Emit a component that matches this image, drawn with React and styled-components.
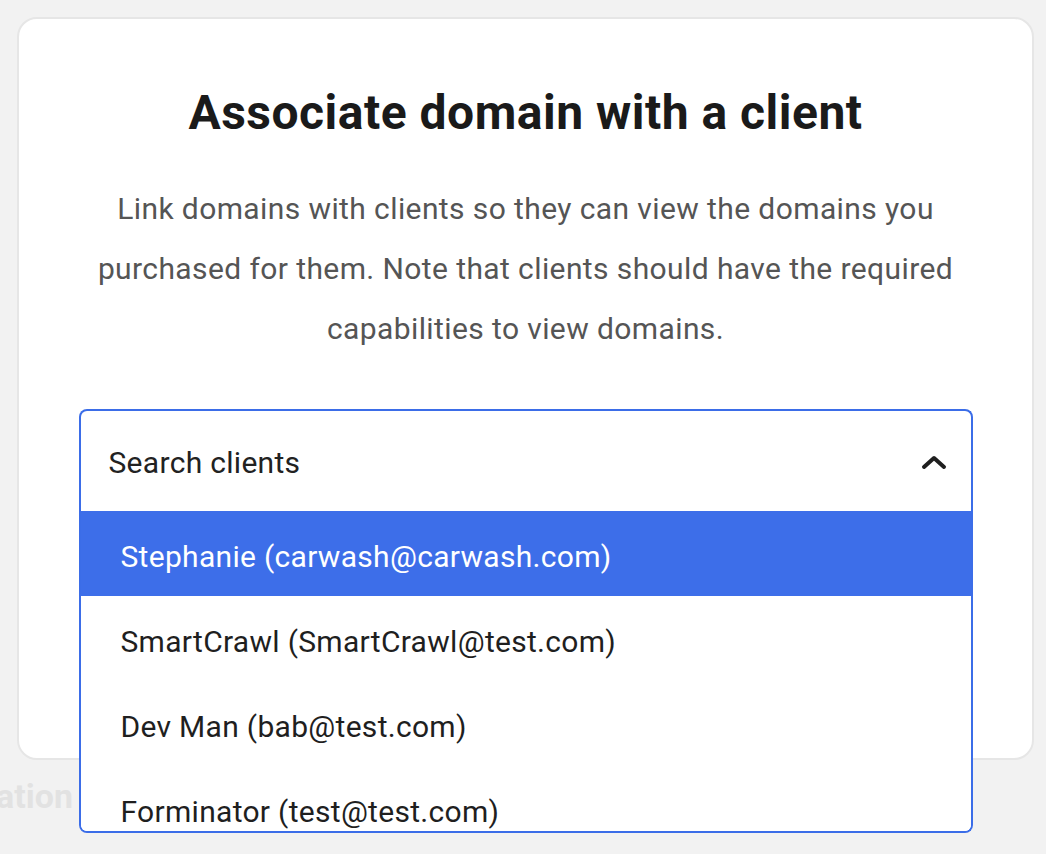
import React from 'react';
import styled, { createGlobalStyle } from 'styled-components';

const clients = [
  { name: 'Stephanie', email: 'carwash@carwash.com' },
  { name: 'SmartCrawl', email: 'SmartCrawl@test.com' },
  { name: 'Dev Man', email: 'bab@test.com' },
  { name: 'Forminator', email: 'test@test.com' },
];

const GlobalStyle = createGlobalStyle`
  html, body {
    margin: 0;
    padding: 0;
    background: #f2f2f2;
    font-family: Roboto, 'Liberation Sans', sans-serif;
  }
  * { box-sizing: border-box; }
`;

const App = () => {
  return (
    <React.Fragment>
      <GlobalStyle />
      <Page>
        <Card>
          <Title>Associate domain with a client</Title>
          <Description>
            Link domains with clients so they can view the domains you
            purchased for them. Note that clients should have the required
            capabilities to view domains.
          </Description>
          <Select>
            <SelectHeader>
              <Placeholder>Search clients</Placeholder>
              <svg width="26" height="16" viewBox="0 0 26 16">
                <polyline
                  points="3,13 13,4 23,13"
                  fill="none"
                  stroke="#1f1f1f"
                  strokeWidth="4"
                  strokeLinecap="round"
                  strokeLinejoin="round"
                />
              </svg>
            </SelectHeader>
            <Menu>
              {clients.map((client, clientIdx) => (
                <Option key={client.email} active={clientIdx === 0}>
                  {client.name} ({client.email})
                </Option>
              ))}
            </Menu>
          </Select>
        </Card>
        <BackdropLabel>ation</BackdropLabel>
      </Page>
    </React.Fragment>
  );
};

export default App;

const Page = styled.div`
  width: 1046px;
  height: 854px;
  padding-top: 17px;
  overflow: hidden;
  background: #f2f2f2;
`;

const Card = styled.section`
  display: flex;
  flex-direction: column;
  align-items: center;
  width: 1017px;
  height: 743px;
  margin-left: 17px;
  padding: 70px 60px 0;
  background: #ffffff;
  border: 2px solid #e6e6e6;
  border-radius: 20px;
`;

const Title = styled.h1`
  margin: 0;
  font-size: 48px;
  line-height: 48px;
  font-weight: 700;
  color: #1a1a1a;
  letter-spacing: 0.5px;
`;

const Description = styled.p`
  margin: 42px 0 0;
  max-width: 890px;
  font-size: 30px;
  line-height: 60px;
  text-align: center;
  color: #555555;
  letter-spacing: 0.4px;
`;

const Select = styled.div`
  position: relative;
  width: 894px;
  margin-top: 50px;
`;

const SelectHeader = styled.div`
  display: flex;
  align-items: center;
  justify-content: space-between;
  height: 102px;
  padding: 2px 24px 0 28px;
  border: 2px solid #3b6de8;
  border-bottom: none;
  border-radius: 8px 8px 0 0;
  background: #ffffff;
`;

const Placeholder = styled.span`
  font-size: 30px;
  color: #222222;
  letter-spacing: 0.3px;
`;

const Menu = styled.ul`
  position: absolute;
  top: 100%;
  left: 0;
  right: 0;
  height: 322px;
  margin: 0;
  padding: 0;
  list-style: none;
  overflow: hidden;
  background: #ffffff;
  border: 2px solid #3b6de8;
  border-top: none;
  border-radius: 0 0 8px 8px;
`;

const Option = styled.li`
  display: flex;
  align-items: center;
  height: 85px;
  padding: 5px 0 0 40px;
  font-size: 30px;
  letter-spacing: 0.3px;
  color: ${({ active }) => (active ? '#ffffff' : '#1f1f1f')};
  background: ${({ active }) => (active ? '#3d6ee9' : '#ffffff')};
`;

const BackdropLabel = styled.div`
  margin: 16px 0 0 -4px;
  font-size: 34px;
  font-weight: 700;
  color: #e2e2e2;
`;
